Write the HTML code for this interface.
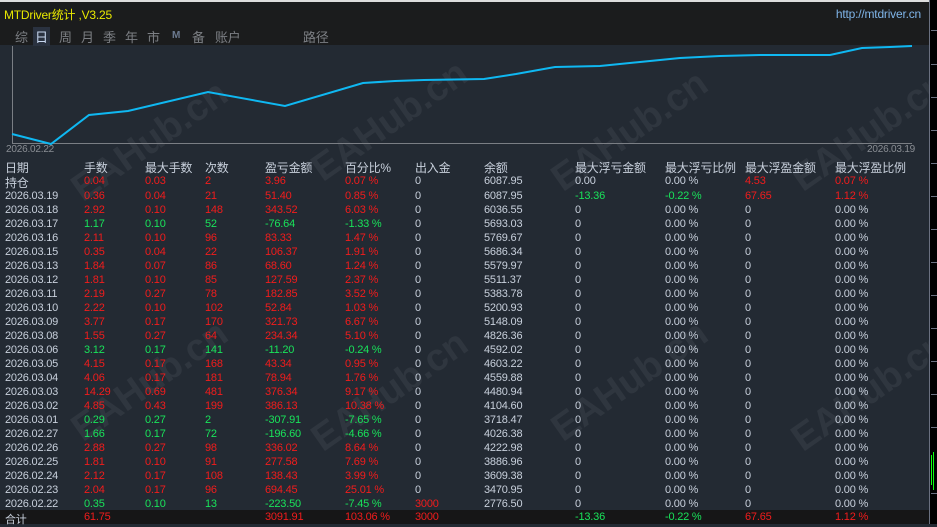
<!DOCTYPE html>
<html><head><meta charset="utf-8"><style>
*{margin:0;padding:0}
body{width:937px;height:524px;background:#232a33;position:relative;overflow:hidden;font-family:"Liberation Sans","Noto Sans CJK SC",sans-serif;font-size:11px;letter-spacing:-0.2px;color:#c8d0dc}
.top{position:absolute;left:0;top:0;width:929px;height:43px;background:#1b1c1d;border-top:2px solid #ddd}
.title{position:absolute;left:4px;top:4px;color:#e8e800;font-size:12px}
.url{position:absolute;right:8px;top:5px;color:#7fb4e8;font-size:12px}
.tabs{position:absolute;top:25px;left:15px;color:#7c7f84;font-size:13px}
.tabs span{position:absolute;white-space:nowrap}
.right{position:absolute;left:929px;top:0;width:8px;height:524px;background:#000;border-left:1px solid #6a7080}
.tick{position:absolute;left:931px;width:6px;height:1px;background:#6a7080}
.t{position:absolute;white-space:nowrap}
.r{color:#f21c1c}.g{color:#19e35a}.w{color:#c8d0dc}.h{color:#c8d0dc;font-size:12px}
.foot{position:absolute;left:0;top:510px;width:929px;height:14px;background:#161617}
.wm{position:absolute;color:rgba(255,255,255,0.06);font-size:38px;font-weight:bold;transform:rotate(-35deg);white-space:nowrap}
</style></head><body>
<div class="top"><div class="title">MTDriver统计 ,V3.25</div><div class="url">http://mtdriver.cn</div>
<div class="tabs"><span style="left:0">综</span><span style="left:20px;color:#c8d8f0;background:#2a3240;padding:0 2px;margin-left:-2px">日</span><span style="left:44px">周</span><span style="left:66px">月</span><span style="left:88px">季</span><span style="left:110px">年</span><span style="left:132px">市</span><span style="left:157px;font-size:10px;top:3px;font-weight:bold;color:#6c7a90">M</span><span style="left:177px">备</span><span style="left:200px">账户</span><span style="left:288px">路径</span></div></div>
<div class="wm" style="left:60px;top:120px">EAHub.cn</div>
<div class="wm" style="left:300px;top:100px">EAHub.cn</div>
<div class="wm" style="left:540px;top:110px">EAHub.cn</div>
<div class="wm" style="left:780px;top:110px">EAHub.cn</div>
<div class="wm" style="left:60px;top:360px">EAHub.cn</div>
<div class="wm" style="left:300px;top:370px">EAHub.cn</div>
<div class="wm" style="left:540px;top:360px">EAHub.cn</div>
<div class="wm" style="left:780px;top:370px">EAHub.cn</div>
<svg style="position:absolute;left:0;top:0" width="937" height="160">
<polyline points="12.5,46 12.5,143.5 912,143.5" fill="none" stroke="#7a7e84" stroke-width="1"/>
<polyline points="12,134 51,144 89,115 128,111 208,92 285,106 363,83 395,81 424,80 484,79 516,74 555,67 600,66 640,62 680,58 720,56 760,55 830,55 862,48 890,47 912,46" fill="none" stroke="#0fb8f2" stroke-width="2"/>
</svg>
<div class="t" style="left:6px;top:144px;color:#8a8e94;font-size:10px">2026.02.22</div>
<div class="t" style="left:867px;top:144px;color:#8a8e94;font-size:10px">2026.03.19</div>
<div class="right"></div>
<div class="tick" style="top:30px"></div><div class="tick" style="top:64px"></div><div class="tick" style="top:97px"></div><div class="tick" style="top:130px"></div><div class="tick" style="top:163px"></div><div class="tick" style="top:196px"></div><div class="tick" style="top:229px"></div><div class="tick" style="top:262px"></div><div class="tick" style="top:295px"></div><div class="tick" style="top:328px"></div><div class="tick" style="top:361px"></div><div class="tick" style="top:394px"></div><div class="tick" style="top:427px"></div><div class="tick" style="top:493px"></div>
<div style="position:absolute;left:931px;top:455px;width:1px;height:30px;background:#1f1"></div>
<div style="position:absolute;left:933px;top:452px;width:1px;height:38px;background:#1f1"></div>
<div class="foot"></div>
<div id="tb"></div>
<script>
const X=[5,84,145,205,265,345,415,484,575,665,745,835];
const H=["日期","手数","最大手数","次数","盈亏金额","百分比%","出入金","余额","最大浮亏金额","最大浮亏比例","最大浮盈金额","最大浮盈比例"];
const R=[
["持仓","r0.04","r0.03","r2","r3.96","r0.07 %","w0","w6087.95","w0.00","w0.00 %","r4.53","r0.07 %"],
["2026.03.19","r0.36","r0.04","r21","r51.40","r0.85 %","w0","w6087.95","g-13.36","g-0.22 %","r67.65","r1.12 %"],
["2026.03.18","r2.92","r0.10","r148","r343.52","r6.03 %"],
["2026.03.17","g1.17","g0.10","g52","g-76.64","g-1.33 %"],
["2026.03.16","r2.11","r0.10","r96","r83.33","r1.47 %"],
["2026.03.15","r0.35","r0.04","r22","r106.37","r1.91 %"],
["2026.03.13","r1.84","r0.07","r86","r68.60","r1.24 %"],
["2026.03.12","r1.81","r0.10","r85","r127.59","r2.37 %"],
["2026.03.11","r2.19","r0.27","r78","r182.85","r3.52 %"],
["2026.03.10","r2.22","r0.10","r102","r52.84","r1.03 %"],
["2026.03.09","r3.77","r0.17","r170","r321.73","r6.67 %"],
["2026.03.08","r1.55","r0.27","r64","r234.34","r5.10 %"],
["2026.03.06","g3.12","g0.17","g141","g-11.20","g-0.24 %"],
["2026.03.05","r4.15","r0.17","r168","r43.34","r0.95 %"],
["2026.03.04","r4.06","r0.17","r181","r78.94","r1.76 %"],
["2026.03.03","r14.29","r0.69","r481","r376.34","r9.17 %"],
["2026.03.02","r4.85","r0.43","r199","r386.13","r10.38 %"],
["2026.03.01","g0.29","g0.27","g2","g-307.91","g-7.65 %"],
["2026.02.27","g1.66","g0.17","g72","g-196.60","g-4.66 %"],
["2026.02.26","r2.88","r0.27","r98","r336.02","r8.64 %"],
["2026.02.25","r1.81","r0.10","r91","r277.58","r7.69 %"],
["2026.02.24","r2.12","r0.17","r108","r138.43","r3.99 %"],
["2026.02.23","r2.04","r0.17","r96","r694.45","r25.01 %"],
["2026.02.22","g0.35","g0.10","g13","g-223.50","g-7.45 %","r3000"]];
const BAL=["6087.95","6087.95","6036.55","5693.03","5769.67","5686.34","5579.97","5511.37","5383.78","5200.93","5148.09","4826.36","4592.02","4603.22","4559.88","4480.94","4104.60","3718.47","4026.38","4222.98","3886.96","3609.38","3470.95","2776.50"];
let h="";
H.forEach((s,i)=>h+=`<div class="t h" style="left:${X[i]}px;top:159px">${s}</div>`);
R.forEach((r,j)=>{const y=175+j*14+(j>0?1:0);
 for(let i=0;i<12;i++){let v=r[i],c="w";
  if(i==0){h+=`<div class="t ${j==0?'h':'w'}" style="left:5px;top:${y-(j==0?1:0)}px">${v}</div>`;continue;}
  if(v===undefined){v=i==6?"w0":i==7?"w"+BAL[j]:(i==9||i==11)?"w0.00 %":"w0";}
  c=v[0];v=v.slice(1);
  h+=`<div class="t ${c}" style="left:${X[i]}px;top:${y}px">${v}</div>`;}
});
const F=[[0,"w合计"],[1,"r61.75"],[4,"r3091.91"],[5,"r103.06 %"],[6,"r3000"],[8,"g-13.36"],[9,"g-0.22 %"],[10,"r67.65"],[11,"r1.12 %"]];
F.forEach(([i,v])=>h+=`<div class="t ${v[0]}" style="left:${X[i]}px;top:511px">${v.slice(1)}</div>`);
document.getElementById("tb").innerHTML=h;
</script>
</body></html>
